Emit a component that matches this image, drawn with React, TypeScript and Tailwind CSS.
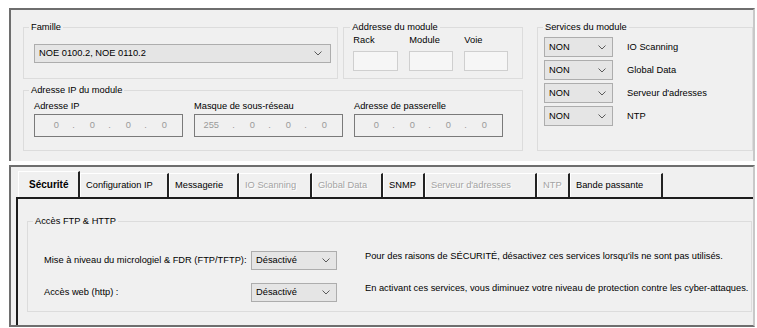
import React from "react";

const Chevron = () => (
  <svg width="8" height="5" viewBox="0 0 8 5" className="shrink-0">
    <polyline points="0.5,0.5 4,4 7.5,0.5" fill="none" stroke="#5a5a5a" strokeWidth="1" />
  </svg>
);

function Combo({ value, className }: { value: string; className: string }) {
  return (
    <div
      className={`flex items-center justify-between border border-[#adadad] bg-[#e5e5e5] pl-[4px] pr-[6px] ${className}`}
    >
      <span>{value}</span>
      <Chevron />
    </div>
  );
}

function IpBox({ parts }: { parts: string[] }) {
  return (
    <div className="flex h-[23px] w-[149px] items-center border border-[#7a7a7a] pl-[12px] text-[#9a9a9a]">
      {parts.map((p, i) => (
        <React.Fragment key={i}>
          <span className="flex w-[12px] justify-end">{p}</span>
          {i < 3 && <span className="w-[24px] pl-[5px] text-center">.</span>}
        </React.Fragment>
      ))}
    </div>
  );
}

const tabs = [
  { label: "Sécurité", w: "w-[62px]", active: true },
  { label: "Configuration IP", w: "w-[89px]" },
  { label: "Messagerie", w: "w-[70px]" },
  { label: "IO Scanning", w: "w-[73px]", disabled: true },
  { label: "Global Data", w: "w-[71px]", disabled: true },
  { label: "SNMP", w: "w-[42px]" },
  { label: "Serveur d'adresses", w: "w-[112px]", disabled: true },
  { label: "NTP", w: "w-[33px]", disabled: true },
  { label: "Bande passante", w: "w-[93px]" },
];

const services = ["IO Scanning", "Global Data", "Serveur d'adresses", "NTP"];

export default function App() {
  return (
    <div className="h-[328px] w-[757px] overflow-hidden bg-white pt-[8px] font-['Liberation_Sans',Arial,sans-serif] text-[9.3px] leading-[11px] text-black">
      {/* Module panel */}
      <div className="ml-[9px] flex h-[153px] w-[746px] gap-[14px] border-t-2 border-l-2 border-r-2 border-[#6e6e6e] border-r-[#c8c8c8] bg-[#f0f0f0] pl-[12px] pt-[12px]">
        <div className="flex w-[500px] flex-col gap-[6px]">
          <div className="flex gap-[5px]">
            <fieldset className="h-[57px] w-[316px] border border-[#dcdcdc]">
              <legend className="ml-[5px] px-[2px]">Famille</legend>
              <div className="mt-[11px] pl-[10px]">
                <Combo value="NOE 0100.2, NOE 0110.2" className="h-[19px] w-[297px] pr-[8px]" />
              </div>
            </fieldset>
            <fieldset className="h-[57px] w-[180px] border border-[#dcdcdc]">
              <legend className="ml-[6px] px-[2px]">Addresse du module</legend>
              <div className="mt-[2px] flex gap-[11px] pl-[9px]">
                {[
                  ["Rack", "w-[45px]"],
                  ["Module", "w-[44px]"],
                  ["Voie", "w-[44px]"],
                ].map(([l, w]) => (
                  <div key={l} className="flex flex-col">
                    <span>{l}</span>
                    <div className={`mt-[5px] h-[20px] border border-[#cfcfcf] bg-[#f6f6f6] ${w}`} />
                  </div>
                ))}
              </div>
            </fieldset>
          </div>
          <fieldset className="h-[66px] w-[500px] border border-[#dcdcdc]">
            <legend className="ml-[5px] px-[2px]">Adresse IP du module</legend>
            <div className="mt-[5px] flex gap-[11px] pl-[10px]">
              <div className="flex flex-col gap-[2px]">
                <span>Adresse IP</span>
                <IpBox parts={["0", "0", "0", "0"]} />
              </div>
              <div className="flex flex-col gap-[2px]">
                <span>Masque de sous-réseau</span>
                <IpBox parts={["255", "0", "0", "0"]} />
              </div>
              <div className="flex flex-col gap-[2px]">
                <span>Adresse de passerelle</span>
                <IpBox parts={["0", "0", "0", "0"]} />
              </div>
            </div>
          </fieldset>
        </div>

        <fieldset className="h-[129px] w-[216px] border border-[#dcdcdc]">
          <legend className="ml-[5px] px-[2px]">Services du module</legend>
          <div className="mt-[4px] flex flex-col gap-[3px] pl-[6px]">
            {services.map((s) => (
              <div key={s} className="flex items-center gap-[14px]">
                <Combo value="NON" className="h-[20px] w-[69px]" />
                <span>{s}</span>
              </div>
            ))}
          </div>
        </fieldset>
      </div>

      {/* Tabs panel */}
      <div className="ml-[9px] mt-[4px] flex h-[162px] w-[746px] flex-col border-2 border-[#6e6e6e] border-r-[#c8c8c8] bg-[#f0f0f0]">
        <div className="flex h-[30px] items-end pl-[7px]">
          {tabs.map((t) => (
            <div
              key={t.label}
              className={`flex items-center border-l border-t border-white border-r-2 border-r-[#222] pl-[5px] ${t.w} ${
                t.active ? "h-[26px] pl-[10px] font-bold text-[10px]" : "h-[24px]"
              } ${t.disabled ? "text-[#a3a3a3] [text-shadow:1px_1px_0_#ffffff]" : ""}`}
            >
              {t.label}
            </div>
          ))}
        </div>
        <div className="ml-[5px] flex-1 border-l-2 border-t-2 border-[#1c1c1c] pl-[9px] pt-[17px]">
          <fieldset className="h-[96px] w-[725px] border border-[#dcdcdc]">
            <legend className="ml-[5px] px-[2px]">Accès FTP &amp; HTTP</legend>
            <div className="mt-[24px] flex flex-col gap-[13px] pl-[16px]">
              <div className="flex items-start">
                <span className="w-[207px] self-center">Mise à niveau du micrologiel &amp; FDR (FTP/TFTP):</span>
                <Combo value="Désactivé" className="h-[19px] w-[86px] pr-[6px]" />
                <span className="ml-[28px]">
                  Pour des raisons de SÉCURITÉ, désactivez ces services lorsqu'ils ne sont pas utilisés.
                </span>
              </div>
              <div className="flex items-start">
                <span className="w-[207px] self-center">Accès web (http) :</span>
                <Combo value="Désactivé" className="h-[19px] w-[86px] pr-[6px]" />
                <span className="ml-[28px]">
                  En activant ces services, vous diminuez votre niveau de protection contre les cyber-attaques.
                </span>
              </div>
            </div>
          </fieldset>
        </div>
      </div>
    </div>
  );
}
